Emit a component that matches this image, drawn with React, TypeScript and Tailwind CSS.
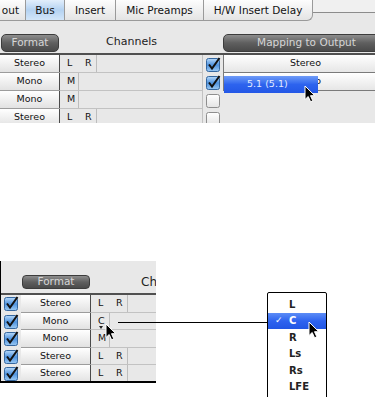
import React from "react";

const font = "font-['DejaVu_Sans',sans-serif]";

const Checkbox = ({ on }: { on: boolean }) =>
  on ? (
    <svg width="15" height="15" viewBox="0 0 15 15">
      <defs>
        <linearGradient id="cbon" x1="0" y1="0" x2="0" y2="1">
          <stop offset="0" stopColor="#b8dafa" />
          <stop offset="0.5" stopColor="#4f93df" />
          <stop offset="1" stopColor="#9ccaf3" />
        </linearGradient>
      </defs>
      <rect x="0.5" y="1.5" width="13" height="13" rx="2" fill="url(#cbon)" stroke="#35679f" />
      <path d="M3 7.5 L6 11.5 L13.5 1" fill="none" stroke="#111" strokeWidth="2" />
    </svg>
  ) : (
    <svg width="15" height="15" viewBox="0 0 15 15">
      <defs>
        <linearGradient id="cboff" x1="0" y1="0" x2="0" y2="1">
          <stop offset="0" stopColor="#ffffff" />
          <stop offset="1" stopColor="#e4e4e4" />
        </linearGradient>
      </defs>
      <rect x="0.5" y="1.5" width="13" height="13" rx="2" fill="url(#cboff)" stroke="#8e8e8e" />
    </svg>
  );

const Cursor = ({ className }: { className: string }) => (
  <svg className={className} width="12" height="18" viewBox="0 0 12 18">
    <path
      d="M1 1 L1 14.5 L4.2 11.5 L6.6 16.8 L8.8 15.8 L6.5 10.7 L10.8 10.7 Z"
      fill="#000"
      stroke="#fff"
      strokeWidth="1"
      strokeLinejoin="round"
    />
  </svg>
);

type Row = { fmt: string; ch: string[]; on: boolean; out?: string };

const topRows: Row[] = [
  { fmt: "Stereo", ch: ["L", "R"], on: true, out: "Stereo" },
  { fmt: "Mono", ch: ["M"], on: true, out: "Stereo" },
  { fmt: "Mono", ch: ["M"], on: false },
  { fmt: "Stereo", ch: ["L", "R"], on: false },
];

const bottomRows: Row[] = [
  { fmt: "Stereo", ch: ["L", "R"], on: true },
  { fmt: "Mono", ch: ["C"], on: true },
  { fmt: "Mono", ch: ["M"], on: true },
  { fmt: "Stereo", ch: ["L", "R"], on: true },
  { fmt: "Stereo", ch: ["L", "R"], on: true },
];

const tabBase =
  "flex h-full shrink-0 items-center justify-center border-b border-r border-[#9a9a9a] pt-[2px] text-[10.5px] whitespace-nowrap";
const tabIdle = "bg-gradient-to-b from-[#fdfdfd] to-[#e4e4e4]";

const ChannelCell = ({ ch }: { ch: string[] }) => (
  <div
    className={`relative flex h-full items-center border-r border-[#bdbdbd] ${
      ch.length > 1 ? "w-[37px]" : "w-[19px]"
    }`}
  >
    {ch.map((c) => (
      <span key={c} className="w-[18px] pl-[7px] text-[9.5px]">
        {c}
      </span>
    ))}
    {ch[0] === "C" && (
      <span className="absolute left-[8px] top-[13px] h-0 w-0 border-x-[2px] border-t-[3px] border-x-transparent border-t-[#222]" />
    )}
  </div>
);

const FormatCell = ({ label, w }: { label: string; w: string }) => (
  <div
    className={`${w} flex h-full shrink-0 items-center justify-center border-r border-[#4a4a4a] bg-gradient-to-b from-[#ffffff] to-[#e2e2e2] text-[9.5px]`}
  >
    {label}
  </div>
);

export default function App() {
  return (
    <div className={`h-[397px] w-[375px] overflow-hidden bg-white text-[#111] ${font}`}>
      {/* top panel */}
      <div className="relative h-[123px] overflow-hidden bg-[#e8e8e8]">
        <div className="flex h-[21px]">
          <div className={`${tabBase} ${tabIdle} w-[26px] justify-end pr-[6px]`}>out</div>
          <div
            className={`${tabBase} w-[39px] bg-gradient-to-b from-[#e2eefb] via-[#b4d2f1] to-[#d3e6f9]`}
          >
            Bus
          </div>
          <div className={`${tabBase} ${tabIdle} w-[51px]`}>Insert</div>
          <div className={`${tabBase} ${tabIdle} w-[88px]`}>Mic Preamps</div>
          <div className={`${tabBase} ${tabIdle} w-[109px] rounded-br-[6px]`}>
            H/W Insert Delay
          </div>
          <div className="h-[13px] flex-1 border-b border-[#8c8c8c] bg-[#f0f0f0]" />
        </div>

        <div className="flex h-[34px] border-b-2 border-[#505050]">
          <div className="w-[60px] shrink-0 pl-[1px] pt-[13px]">
            <div className="flex h-[18px] w-[58px] items-center justify-center rounded-[5px] border border-[#3c3c3c] bg-gradient-to-b from-[#8e8e8e] via-[#5f5f5f] to-[#4a4a4a] text-[10.5px] text-[#d6d6d6]">
              Format
            </div>
          </div>
          <div className="flex w-[143px] shrink-0 items-center justify-center pt-[10px] text-[11px] text-[#222]">
            Channels
          </div>
          <div className="w-[20px] shrink-0" />
          <div className="shrink-0 pt-[13px]">
            <div className="flex h-[18px] w-[167px] items-center justify-center rounded-[5px] border border-[#3c3c3c] bg-gradient-to-b from-[#8e8e8e] via-[#5f5f5f] to-[#4a4a4a] text-[10.5px] text-[#d6d6d6]">
              Mapping to Output
            </div>
          </div>
        </div>

        {topRows.map((r, i) => (
          <div key={i} className="flex h-[18px]">
            <div className="flex h-full border-b border-[#9c9c9c]">
              <FormatCell label={r.fmt} w="w-[60px]" />
            </div>
            <div className="flex h-full w-[143px] shrink-0 border-b border-r border-[#c2c2c2]">
              <ChannelCell ch={r.ch} />
            </div>
            <div className="flex h-full w-[20px] shrink-0 items-center pl-[3px]">
              <Checkbox on={r.on} />
            </div>
            {r.out ? (
              <div className="flex h-full flex-1 items-center justify-center border-b border-l border-[#7a7a7a] bg-gradient-to-b from-[#ffffff] to-[#e6e6e6] pl-[12px] text-[9.5px]">
                {r.out}
              </div>
            ) : (
              <div className="h-full flex-1" />
            )}
          </div>
        ))}

        <div className="absolute left-[224px] top-[76px] flex h-[17px] w-[94px] items-center bg-gradient-to-b from-[#6f9bf7] via-[#2d63ee] to-[#2357e6] pl-[23px] text-[9.5px] text-[#e2ebff]">
          5.1 (5.1)
        </div>
        <Cursor className="absolute left-[304px] top-[85px]" />
      </div>

      {/* bottom panel */}
      <div className="relative mt-[138px] flex h-[136px]">
        <div className="h-[122px] w-[156px] shrink-0 overflow-hidden border-b-2 border-l border-black bg-[#e8e8e8]">
          <div className="flex h-[34px] border-b-2 border-[#505050]">
            <div className="w-[21px] shrink-0" />
            <div className="w-[69px] shrink-0 pt-[14px]">
              <div className="flex h-[14px] w-[68px] items-center justify-center rounded-[4px] border border-[#3c3c3c] bg-gradient-to-b from-[#8e8e8e] via-[#5f5f5f] to-[#4a4a4a] text-[10.5px] text-[#d6d6d6]">
                Format
              </div>
            </div>
            <div className="flex shrink-0 items-center whitespace-nowrap pl-[50px] pt-[10px] text-[12px] text-[#222]">
              Ch
            </div>
          </div>
          {bottomRows.map((r, i) => (
            <div key={i} className="flex h-[17.5px]">
              <div className="flex h-full w-[20px] shrink-0 items-center pl-[3px]">
                <Checkbox on={r.on} />
              </div>
              <div className="flex h-full border-b border-[#9c9c9c]">
                <FormatCell label={r.fmt} w="w-[70px]" />
              </div>
              <div className="flex h-full flex-1 border-b border-[#c2c2c2]">
                <ChannelCell ch={r.ch} />
              </div>
            </div>
          ))}
        </div>

        <div className="ml-[111px] mt-[31px] h-[110px] w-[60px] shrink-0 rounded-t-[2px] border border-black bg-white pt-[3px] text-[10px] font-bold text-[#222]">
          {["L", "C", "R", "Ls", "Rs", "LFE"].map((m) =>
            m === "C" ? (
              <div
                key={m}
                className="flex h-[16.5px] items-center bg-gradient-to-b from-[#5c8cf6] via-[#2e63ef] to-[#2156e4] pl-[7px] text-white"
              >
                <span className="w-[14px] text-[9px]">✓</span>
                {m}
              </div>
            ) : (
              <div key={m} className="flex h-[16.5px] items-center pl-[21px]">
                {m}
              </div>
            )
          )}
        </div>

        <div className="absolute left-[118px] top-[61px] h-px w-[149px] bg-black" />
        <Cursor className="absolute left-[105px] top-[62px]" />
        <Cursor className="absolute left-[308px] top-[60px]" />
      </div>
    </div>
  );
}
